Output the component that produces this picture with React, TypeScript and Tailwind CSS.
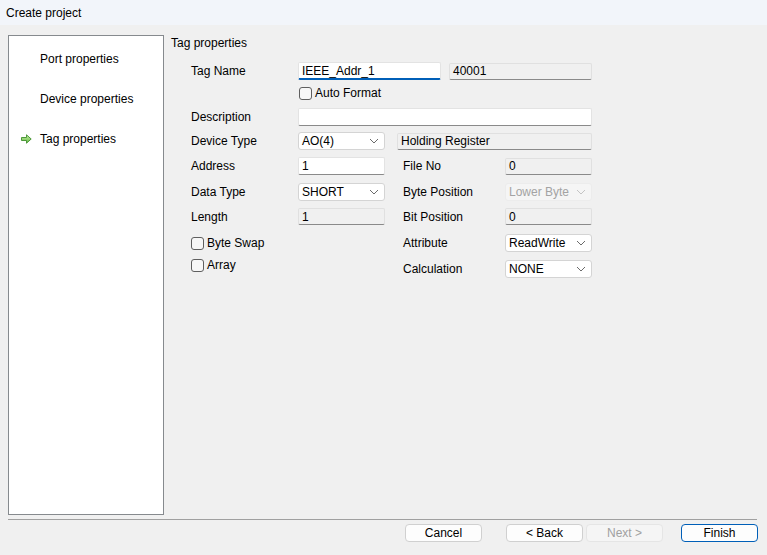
import React from "react";

const Chevron = ({ disabled = false }: { disabled?: boolean }) => (
  <svg width="10" height="6" viewBox="0 0 10 6" className="shrink-0">
    <path d="M1 1l4 4 4-4" fill="none" stroke={disabled ? "#c4c4c4" : "#6b6b6b"} strokeWidth="1" />
  </svg>
);

const TextBox = ({ value = "", w, focused = false }: { value?: string; w: string; focused?: boolean }) => (
  <div
    className={`${w} h-[18px] bg-white rounded-[2px] border border-[#e3e3e3] flex items-center px-[3px] ${
      focused ? "border-b-2 border-b-[#005fb8]" : "border-b-[#8a8a8a]"
    }`}
  >
    <span className="leading-none">{value}</span>
  </div>
);

const ReadBox = ({ value, w }: { value: string; w: string }) => (
  <div className={`${w} h-[17px] bg-[#f0f0f0] rounded-[2px] border border-[#e0e0e0] border-b-[#8a8a8a] flex items-center px-[3px]`}>
    <span className="leading-none">{value}</span>
  </div>
);

const Select = ({ value, disabled = false }: { value: string; disabled?: boolean }) => (
  <div
    className={`w-[87px] h-[18px] rounded-[3px] border flex items-center justify-between pl-[3px] pr-[5px] ${
      disabled ? "bg-[#f5f5f5] border-[#ececec] text-[#a3a3a3]" : "bg-white border-[#d4d4d4]"
    }`}
  >
    <span className="leading-none">{value}</span>
    <Chevron disabled={disabled} />
  </div>
);

const Check = ({ label }: { label: string }) => (
  <div className="flex items-center gap-[3px] h-[14px]">
    <div className="w-[13px] h-[13px] rounded-[3px] border border-[#5f5f5f] bg-[#f7f7f7]" />
    <span className="leading-none">{label}</span>
  </div>
);

const Label = ({ text, w = "w-[107px]" }: { text: string; w?: string }) => (
  <div className={`${w} shrink-0 leading-none`}>{text}</div>
);

const Button = ({ text, variant = "normal" }: { text: string; variant?: "normal" | "disabled" | "primary" }) => {
  const style =
    variant === "disabled"
      ? "bg-[#f5f5f5] border-[#e5e5e5] text-[#a0a0a0]"
      : variant === "primary"
      ? "bg-[#fdfdfd] border-[#005fb8] text-black"
      : "bg-[#fdfdfd] border-[#d0d0d0] text-black";
  return (
    <div className={`w-[77px] h-[18px] rounded-[4px] border flex items-center justify-center ${style}`}>
      <span className="leading-none">{text}</span>
    </div>
  );
};

export default function App() {
  return (
    <div
      className="w-[767px] h-[555px] bg-[#f0f0f0] flex flex-col text-[12px] text-black overflow-hidden"
      style={{ fontFamily: '"Liberation Sans", Arial, sans-serif' }}
    >
      {/* title bar */}
      <div className="h-[25px] shrink-0 bg-[#f2f5fa] flex items-center px-[6px]">
        <span className="leading-none">Create project</span>
      </div>

      {/* main */}
      <div className="flex pt-[10px] pl-[8px]">
        <div className="w-[156px] h-[480px] shrink-0 bg-white border border-[#868a8e] flex flex-col pt-[17px]">
          <div className="pl-[31px] h-[12px] leading-none">Port properties</div>
          <div className="pl-[31px] h-[12px] mt-[28px] leading-none">Device properties</div>
          <div className="flex items-center h-[12px] mt-[28px] pl-[12px]">
            <svg width="11" height="10" viewBox="0 0 11 10" className="mr-[8px]">
              <defs>
                <linearGradient id="ag" x1="0" y1="0" x2="0" y2="1">
                  <stop offset="0" stopColor="#c8f0a8" />
                  <stop offset="1" stopColor="#62b83e" />
                </linearGradient>
              </defs>
              <path d="M0.5 3.5h5V0.8L10.2 5 5.5 9.2V6.5h-5z" fill="url(#ag)" stroke="#3f8f2c" strokeWidth="0.9" />
            </svg>
            <span className="leading-none">Tag properties</span>
          </div>
        </div>

        <div className="ml-[7px] flex flex-col">
          <div className="h-[12px] mt-[2px] leading-none">Tag properties</div>

          <div className="pl-[20px] flex flex-col">
            {/* Tag Name */}
            <div className="flex items-start mt-[16px]">
              <Label text="Tag Name" />
              <div className="-mt-[3px] flex items-center gap-[8px]">
                <TextBox value="IEEE_Addr_1" w="w-[143px]" focused />
                <ReadBox value="40001" w="w-[143px]" />
              </div>
            </div>

            {/* Auto Format */}
            <div className="flex mt-[6px]">
              <div className="w-[108px] shrink-0" />
              <Check label="Auto Format" />
            </div>

            {/* Description */}
            <div className="flex items-center mt-[8px]">
              <Label text="Description" />
              <TextBox w="w-[294px]" />
            </div>

            {/* Device Type */}
            <div className="flex items-center mt-[6px]">
              <Label text="Device Type" />
              <Select value="AO(4)" />
              <div className="ml-[12px]">
                <ReadBox value="Holding Register" w="w-[195px]" />
              </div>
            </div>

            {/* Address / File No */}
            <div className="flex items-center mt-[7px]">
              <Label text="Address" />
              <TextBox value="1" w="w-[87px]" />
              <div className="w-[18px]" />
              <Label text="File No" w="w-[102px]" />
              <ReadBox value="0" w="w-[87px]" />
            </div>

            {/* Data Type / Byte Position */}
            <div className="flex items-center mt-[8px]">
              <Label text="Data Type" />
              <Select value="SHORT" />
              <div className="w-[18px]" />
              <Label text="Byte Position" w="w-[102px]" />
              <Select value="Lower Byte" disabled />
            </div>

            {/* Length / Bit Position */}
            <div className="flex items-center mt-[7px]">
              <Label text="Length" />
              <ReadBox value="1" w="w-[87px]" />
              <div className="w-[18px]" />
              <Label text="Bit Position" w="w-[102px]" />
              <ReadBox value="0" w="w-[87px]" />
            </div>

            {/* checkboxes / attribute, calculation */}
            <div className="flex mt-[9px]">
              <div className="w-[212px] shrink-0 flex flex-col gap-[8px] pt-[2px]">
                <Check label="Byte Swap" />
                <Check label="Array" />
              </div>
              <div className="flex flex-col gap-[8px]">
                <div className="flex items-center">
                  <Label text="Attribute" w="w-[102px]" />
                  <Select value="ReadWrite" />
                </div>
                <div className="flex items-center">
                  <Label text="Calculation" w="w-[102px]" />
                  <Select value="NONE" />
                </div>
              </div>
            </div>
          </div>
        </div>
      </div>

      {/* separator */}
      <div className="mt-[4px] ml-[8px] mr-[10px] h-[1px] bg-[#a0a0a0]" />

      {/* buttons */}
      <div className="flex justify-end items-center mt-[4px] pr-[9px]">
        <Button text="Cancel" />
        <div className="ml-[24px]">
          <Button text="< Back" />
        </div>
        <div className="ml-[3px]">
          <Button text="Next >" variant="disabled" />
        </div>
        <div className="ml-[18px]">
          <Button text="Finish" variant="primary" />
        </div>
      </div>
    </div>
  );
}
